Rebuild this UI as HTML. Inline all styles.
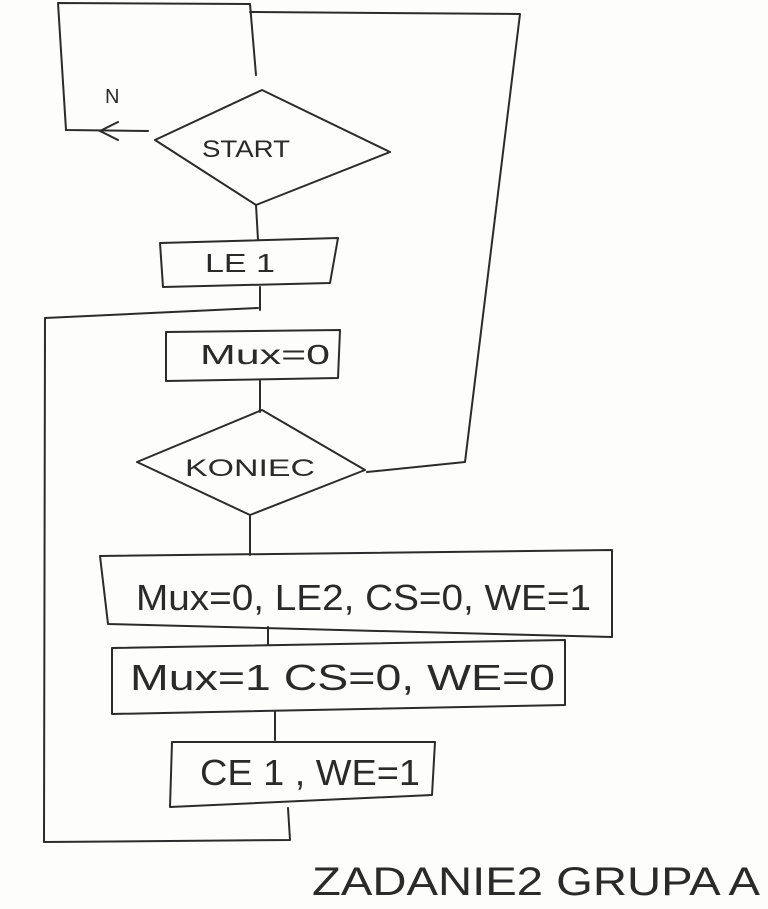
<!DOCTYPE html>
<html><head><meta charset="utf-8"><style>
html,body{margin:0;padding:0;background:#fdfdfb;}
svg{display:block}
text{font-family:"Liberation Sans",sans-serif;fill:#2a2a2a;}
</style></head><body>
<svg width="768" height="909" viewBox="0 0 768 909" xmlns="http://www.w3.org/2000/svg">
<g fill="none" stroke="#2b2b2b" stroke-width="2" stroke-linecap="round" stroke-linejoin="round">
<path d="M256 75 L250 4 L58 3 L66 130 L148 131"/>
<path d="M118 122 L100 131 L118 140"/>
<path d="M250 12 L520 14 L465 462 L367 472"/>
<path d="M155 140 L262 90 L390 152 L256 205 Z"/>
<path d="M256 205 L258 240"/>
<path d="M160 243 L338 238 L330 283 L163 287 Z"/>
<path d="M260 287 L260 310"/>
<path d="M258 308 L45 318 L44 842 L290 840 L288 808"/>
<path d="M166 332 L340 330 L338 378 L166 381 Z"/>
<path d="M260 381 L260 412"/>
<path d="M137 462 L262 410 L365 470 L250 515 Z"/>
<path d="M250 515 L250 555"/>
<path d="M100 556 L612 550 L612 637 L108 624 Z"/>
<path d="M268 627 L268 645"/>
<path d="M112 648 L565 640 L565 705 L112 714 Z"/>
<path d="M275 712 L275 740"/>
<path d="M172 742 L435 742 L432 795 L170 807 Z"/>
</g>
<text x="105" y="103" font-size="20">N</text>
<text x="202" y="157" font-size="24" textLength="88" lengthAdjust="spacingAndGlyphs">START</text>
<text x="205" y="272" font-size="26" textLength="70" lengthAdjust="spacingAndGlyphs">LE 1</text>
<text x="200" y="364" font-size="28" textLength="130" lengthAdjust="spacingAndGlyphs">Mux=0</text>
<text x="185" y="476" font-size="24" textLength="130" lengthAdjust="spacingAndGlyphs">KONIEC</text>
<text x="136" y="610" font-size="36" textLength="455" lengthAdjust="spacingAndGlyphs">Mux=0, LE2, CS=0, WE=1</text>
<text x="130" y="690" font-size="36" textLength="425" lengthAdjust="spacingAndGlyphs">Mux=1  CS=0, WE=0</text>
<text x="200" y="785" font-size="36" textLength="220" lengthAdjust="spacingAndGlyphs">CE 1 , WE=1</text>
<text x="312" y="895" font-size="40" textLength="448" lengthAdjust="spacingAndGlyphs">ZADANIE2  GRUPA  A</text>
</svg>
</body></html>
